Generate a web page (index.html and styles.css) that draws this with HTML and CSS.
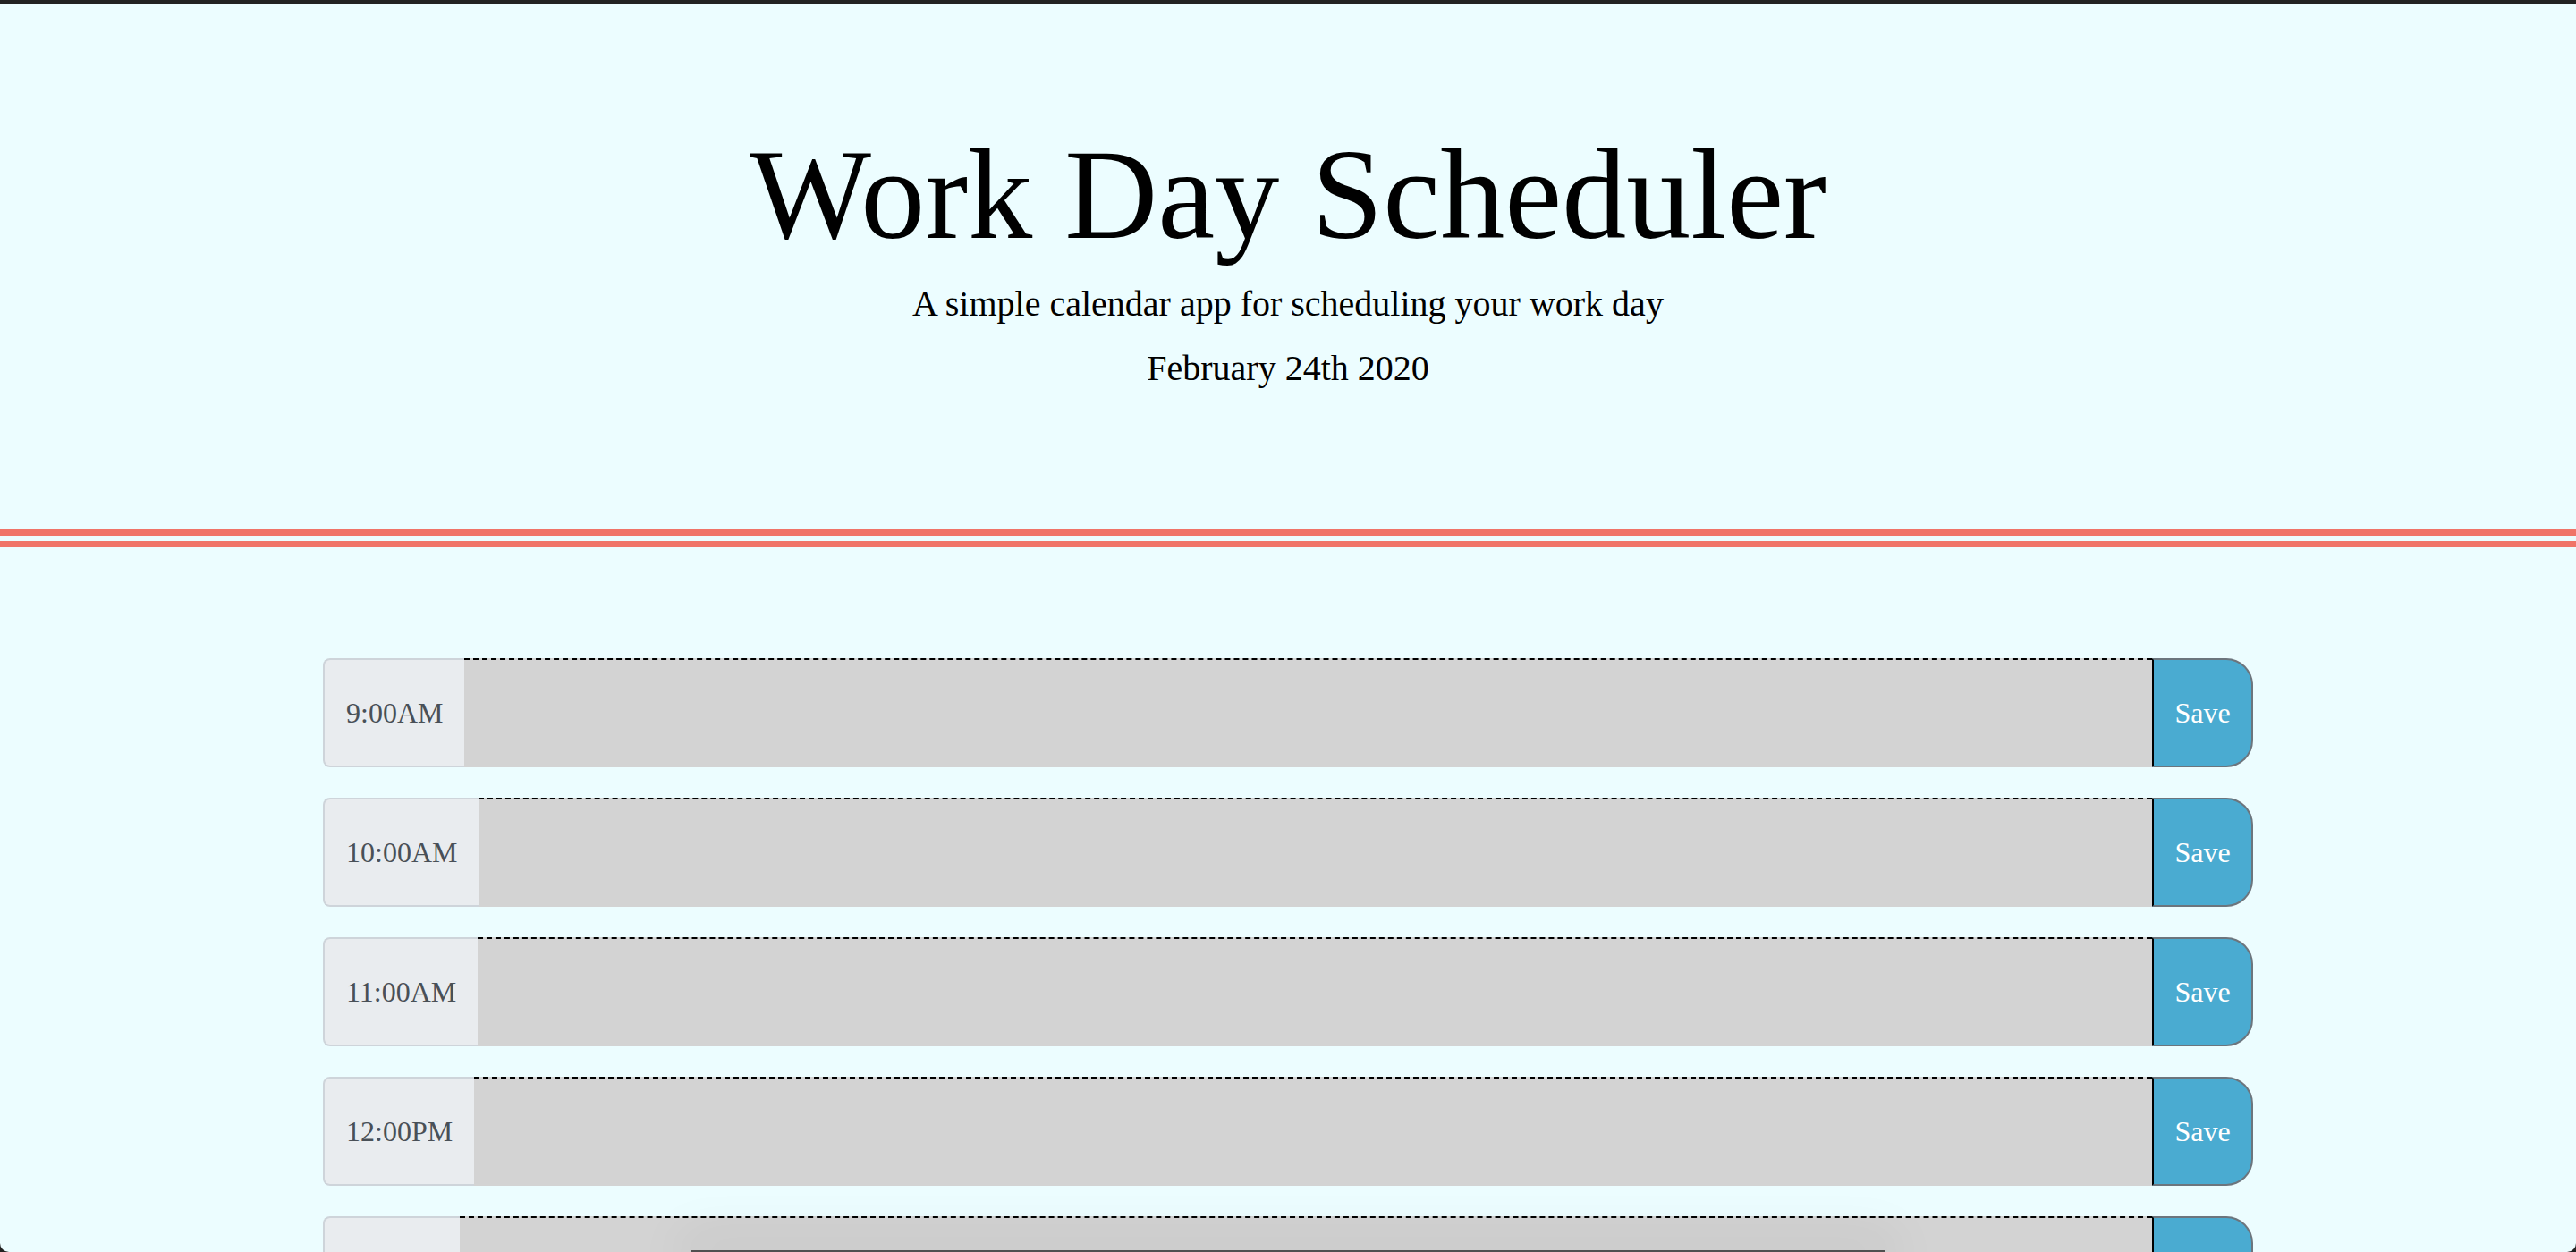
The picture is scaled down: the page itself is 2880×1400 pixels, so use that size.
FILE: index.html
```
<!DOCTYPE html>
<html lang="en">
<head>
<meta charset="utf-8">
<title>Work Day Scheduler</title>
<link rel="stylesheet" href="styles.css">
</head>
<body>
<div class="window">
  <header class="jumbotron">
    <h1 class="title">Work Day Scheduler</h1>
    <p class="lead">A simple calendar app for scheduling your work day</p>
    <p class="lead date">February 24th 2020</p>
  </header>
  <main class="container">
    <div class="time-block"><div class="hour">9:00AM</div><textarea class="description"></textarea><button class="saveBtn">Save</button></div>
    <div class="time-block"><div class="hour">10:00AM</div><textarea class="description"></textarea><button class="saveBtn">Save</button></div>
    <div class="time-block"><div class="hour">11:00AM</div><textarea class="description"></textarea><button class="saveBtn">Save</button></div>
    <div class="time-block"><div class="hour">12:00PM</div><textarea class="description"></textarea><button class="saveBtn">Save</button></div>
    <div class="time-block"><div class="hour">1:00PM</div><textarea class="description"></textarea><button class="saveBtn">Save</button></div>
    <div class="time-block"><div class="hour">2:00PM</div><textarea class="description"></textarea><button class="saveBtn">Save</button></div>
    <div class="time-block"><div class="hour">3:00PM</div><textarea class="description"></textarea><button class="saveBtn">Save</button></div>
    <div class="time-block"><div class="hour">4:00PM</div><textarea class="description"></textarea><button class="saveBtn">Save</button></div>
    <div class="time-block"><div class="hour">5:00PM</div><textarea class="description"></textarea><button class="saveBtn">Save</button></div>
  </main>
  <div class="dock-shadow"></div>
</div>
</body>
</html>
```
FILE: styles.css
```
html, body {
  margin: 0;
  background: #222222;
}

body {
  padding-top: 4px;
}

.window {
  position: relative;
  height: 1396px;
  overflow: hidden;
  background: #ecfdff;
  border-radius: 0 0 10px 10px;
  font-family: "Liberation Serif", "Times New Roman", serif;
  color: #000;
}

.jumbotron {
  padding: 128px 0 156.5px;
  text-align: center;
  border-bottom: 20px double #f07468;
}

.title {
  margin: 0 0 11px;
  font-size: 144px;
  font-weight: 400;
  line-height: 172.8px;
}

.lead {
  margin: 0;
  font-size: 40px;
  line-height: 48px;
  font-weight: 400;
}

.date {
  margin-top: 24px;
}

.container {
  width: 2158px;
  margin: 124px auto 0;
  display: flex;
  flex-direction: column;
  gap: 34px;
}

.time-block {
  display: flex;
  height: 122px;
}

.hour {
  display: flex;
  align-items: center;
  padding: 0 24px;
  background: #e9ecef;
  color: #495057;
  border: 2px solid #ced4da;
  border-right: 0;
  border-radius: 8px 0 0 8px;
  font-size: 32px;
}

.description {
  flex: 1;
  margin: 0;
  padding: 0;
  border: 0;
  border-top: 2px dashed #000;
  background: #d3d3d3;
  resize: none;
  font-family: inherit;
  font-size: 32px;
  outline: none;
}

.saveBtn {
  width: 113px;
  margin: 0;
  padding: 0;
  border: 2px solid #6c757d;
  border-left-color: #000;
  border-radius: 0 30px 30px 0;
  background: #4aabd1;
  color: #fff;
  font-family: "Liberation Serif", "Times New Roman", serif;
  font-size: 32px;
}

.dock-shadow {
  position: absolute;
  left: 773px;
  bottom: 0;
  width: 1335px;
  height: 2px;
  background: #505050;
  box-shadow: 0 0 60px 12px rgba(0, 0, 0, 0.09);
}
```
